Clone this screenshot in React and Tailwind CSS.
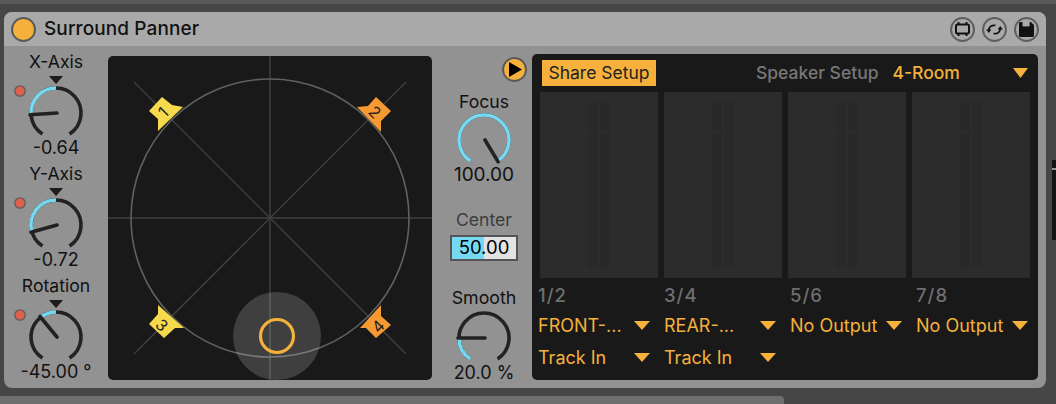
import React from "react";

const BLUE = "#76d9f2";
const DARK = "#222222";
const ORANGE = "#f5b13b";

const pt = (cx, cy, r, a) => {
  const t = (a * Math.PI) / 180;
  return [cx + r * Math.sin(t), cy - r * Math.cos(t)];
};
const arc = (cx, cy, r, a, b) => {
  const [x1, y1] = pt(cx, cy, r, a);
  const [x2, y2] = pt(cx, cy, r, b);
  return `M${x1} ${y1}A${r} ${r} 0 ${b - a > 180 ? 1 : 0} 1 ${x2} ${y2}`;
};

function Dial({ cx, cy, value, origin = -147, width, height, marker, dot }) {
  const lo = Math.min(origin, value);
  const hi = Math.max(origin, value);
  const [nx, ny] = pt(cx, cy, 26, value);
  return (
    <svg width={width} height={height} className="block shrink-0">
      {marker && <polygon points={`${cx - 7},${cy - 37} ${cx + 7},${cy - 37} ${cx},${cy - 29}`} fill="#1c1c1c" />}
      {dot && <circle cx={dot} cy={cy - 22} r="5.2" fill="#e0604e" stroke="#5c5c5c" strokeWidth="1.3" />}
      <path d={arc(cx, cy, 25, -147, 147)} fill="none" stroke={DARK} strokeWidth="3.6" />
      {hi > lo && <path d={arc(cx, cy, 25, lo, hi)} fill="none" stroke={BLUE} strokeWidth="3.6" />}
      <line x1={cx + 1} y1={cy} x2={nx} y2={ny} stroke={DARK} strokeWidth="3.6" strokeLinecap="round" />
    </svg>
  );
}

function SideKnob({ label, value, angle }) {
  return (
    <div className="flex flex-col items-center w-[104px] mb-2">
      <div className="h-5 leading-5 text-[17.6px] text-[#111] whitespace-nowrap">{label}</div>
      <Dial cx={52} cy={41} width={104} height={66} value={angle} origin={0} marker dot={16} />
      <div className="h-[18px] pt-px leading-[18px] text-[18px] text-[#111] whitespace-nowrap">{value}</div>
    </div>
  );
}

function Tri({ w = 16, h = 9 }) {
  return (
    <svg width={w} height={h} className="block shrink-0">
      <polygon points={`0,0 ${w},0 ${w / 2},${h}`} fill={ORANGE} />
    </svg>
  );
}

function Meter() {
  return (
    <div className="h-[186px] bg-[#2c2c2c] flex justify-center gap-[2px] pt-[10px] pb-[10px]">
      {[0, 1].map((i) => (
        <div key={i} className="w-[10px] flex flex-col gap-[2px]">
          <div className="h-[29px] bg-[#292929]" />
          <div className="flex-1 bg-[#292929]" />
        </div>
      ))}
    </div>
  );
}

function Drop({ text }) {
  return (
    <div className="h-8 flex items-center text-[#f5b13b] text-[18px] w-[112px] justify-between">
      <span className="whitespace-nowrap">{text}</span>
      <Tri />
    </div>
  );
}

function Round({ children }) {
  return (
    <div className="w-[25px] h-[25px] rounded-full border-2 border-[#5f5f5f] flex items-center justify-center">
      {children}
    </div>
  );
}

function Flag({ points, color, x, y, rot, n }) {
  return (
    <g>
      <polygon points={points} fill={color} />
      <text x={x} y={y} transform={`rotate(${rot} ${x} ${y})`} textAnchor="middle" dominantBaseline="central" fontSize="16" fill="#222">
        {n}
      </text>
    </g>
  );
}

function Pad() {
  return (
    <div className="w-[324px] h-[324px] mt-[10px] rounded-[5px] bg-[#191919] shrink-0 overflow-hidden">
      <svg width="324" height="324" className="block">
        <g stroke="#3f3f3f" strokeWidth="1.5">
          <line x1="162" y1="0" x2="162" y2="324" />
          <line x1="0" y1="162" x2="324" y2="162" />
          <line x1="26" y1="26" x2="298" y2="298" />
          <line x1="298" y1="26" x2="26" y2="298" />
        </g>
        <circle cx="162" cy="162" r="139" fill="none" stroke="#606060" strokeWidth="1.6" />
        <circle cx="169" cy="280" r="44" fill="#ffffff" fillOpacity="0.17" />
        <circle cx="169" cy="280" r="16.5" fill="none" stroke={ORANGE} strokeWidth="3.2" />
        <Flag n="1" color="#f7d94c" x={55} y={56} rot={-45} points="54,41 64,49 75,51 50,75 50,63 41,55" />
        <Flag n="2" color="#f59a33" x={267} y={56} rot={45} points="268,41 283,55 273,65 273,76 249,51 260,50" />
        <Flag n="3" color="#f7d94c" x={54} y={269} rot={45} points="50,249 76,272 67,272 56,282 41,268 50,258" />
        <Flag n="4" color="#f59a33" x={270} y={270} rot={-45} points="273,249 273,260 283,269 268,282 258,272 252,272" />
      </svg>
    </div>
  );
}

export default function App() {
  const cols = [
    ["1/2", "FRONT-...", "Track In"],
    ["3/4", "REAR-...", "Track In"],
    ["5/6", "No Output", null],
    ["7/8", "No Output", null],
  ];
  return (
    <div className="w-[1056px] h-[404px] bg-[#464646] overflow-hidden flex flex-col font-['Inter',sans-serif]">
      <div className="h-1 bg-[#5a5a5a] shrink-0" />
      <div className="flex mt-2 h-[376px] shrink-0">
        <div className="ml-1 w-[1042px] h-[376px] rounded-[8px] bg-[#929292] overflow-hidden flex flex-col">
          <div className="h-[34px] bg-[#a9a9a9] flex items-center shrink-0 pl-[7px] pr-[7px]">
            <div className="w-[25px] h-[25px] rounded-full bg-[#f5b13b] border-2 border-[#5a5a5a]" />
            <div className="ml-[8px] text-[19px] font-medium text-[#111] tracking-[0.1px]">Surround Panner</div>
            <div className="ml-auto flex gap-[7px]">
              <Round>
                <svg width="15" height="14" viewBox="0 0 15 14">
                  <rect x="1" y="2.5" width="13" height="9" rx="1.5" fill="none" stroke="#111" strokeWidth="2" />
                  <path d="M3.5 0v3M11.5 0v3M3.5 11v3M11.5 11v3" stroke="#111" strokeWidth="2" />
                </svg>
              </Round>
              <Round>
                <svg width="17" height="15" viewBox="0 0 19 17">
                  <path d="M3 9.5C3 5.5 6 3.2 10.5 3.8" fill="none" stroke="#111" strokeWidth="2" />
                  <polygon points="0,8.5 6,8.5 3,12.5" fill="#111" />
                  <path d="M16 7.5C16 11.5 13 13.8 8.5 13.2" fill="none" stroke="#111" strokeWidth="2" />
                  <polygon points="13,8.5 19,8.5 16,4.5" fill="#111" />
                </svg>
              </Round>
              <Round>
                <svg width="15" height="15" viewBox="0 0 17 17">
                  <path d="M1.5 0H13.5L17 3.5V15.5Q17 17 15.5 17H1.5Q0 17 0 15.5V1.5Q0 0 1.5 0Z" fill="#111" />
                  <rect x="4" y="0" width="8" height="5" fill="#a9a9a9" />
                </svg>
              </Round>
            </div>
          </div>
          <div className="flex flex-1">
            <div className="w-[104px] pt-[6px] shrink-0 flex flex-col">
              <SideKnob label="X-Axis" value="-0.64" angle={-94} />
              <SideKnob label="Y-Axis" value="-0.72" angle={-106} />
              <SideKnob label="Rotation" value="-45.00 °" angle={-38} />
            </div>
            <Pad />
            <div className="w-[100px] shrink-0 flex flex-col items-center pl-1">
              <div className="mt-[11px] self-end mr-[5px] w-[25px] h-[25px] rounded-full bg-[#f5b13b] border-2 border-[#5a5a5a] flex items-center justify-center">
                <svg width="14" height="15"><polygon points="1,0 14,7.5 1,15" fill="#000" /></svg>
              </div>
              <div className="mt-[9px] h-5 pt-px leading-5 text-[17.6px] text-[#111]">Focus</div>
              <Dial cx={30} cy={29} width={60} height={55} value={147} />
              <div className="h-[18px] leading-[18px] text-[19px] text-[#111]">100.00</div>
              <div className="mt-[26px] h-5 leading-5 text-[17.6px] text-[#3c3c3c]">Center</div>
              <div className="mt-[5px] w-[68px] h-[26px] border-2 border-[#555] bg-[#e3e3e3] flex relative">
                <div className="w-[32px] bg-[#76d9f2]" />
                <div className="absolute inset-0 flex items-center justify-center text-[18.5px] text-[#000]">50.00</div>
              </div>
              <div className="mt-[27px] h-5 leading-5 text-[17.8px] text-[#111]">Smooth</div>
              <Dial cx={30} cy={30} width={60} height={56} value={-90} />
              <div className="h-[18px] leading-[18px] text-[18px] text-[#111]">20.0 %</div>
            </div>
            <div className="w-[506px] h-[326px] mt-[8px] rounded-[5px] bg-[#191919] shrink-0 flex flex-col">
              <div className="h-[38px] flex items-start pt-[6px] pl-[10px] shrink-0">
                <div className="w-[114px] h-[26px] pt-px bg-[#f5b13b] flex items-center justify-center text-[17.5px] text-[#222]">Share Setup</div>
                <div className="ml-[100px] h-[26px] pt-px flex items-center text-[17.5px] font-medium text-[#777] whitespace-nowrap">Speaker Setup</div>
                <div className="ml-[14px] h-[26px] pt-px flex items-center text-[17.5px] font-medium text-[#f5b13b]">4-Room</div>
                <div className="ml-auto mr-[10px] mt-[8px]"><Tri w={15} h={10} /></div>
              </div>
              <div className="grid grid-cols-4 gap-[6px] px-2 shrink-0">
                <Meter />
                <Meter />
                <Meter />
                <Meter />
              </div>
              <div className="grid grid-cols-[repeat(4,126px)] pl-[6px] pt-[7px]">
                {cols.map(([n, a, b]) => (
                  <div key={n} className="flex flex-col">
                    <div className="h-5 leading-5 text-[18.5px] tracking-[1px] font-medium text-[#6e6e6e] mb-[4px]">{n}</div>
                    <Drop text={a} />
                    {b && <Drop text={b} />}
                  </div>
                ))}
              </div>
            </div>
          </div>
        </div>
        <div className="ml-[6px] mt-[148px] w-1 h-20 bg-[#141414] shrink-0 pt-2">
          <div className="h-[2px] bg-[#999]" />
        </div>
      </div>
      <div className="mt-2 h-2 w-[784px] bg-[#6e6e6e] rounded-tr-[4px] shrink-0" />
    </div>
  );
}
